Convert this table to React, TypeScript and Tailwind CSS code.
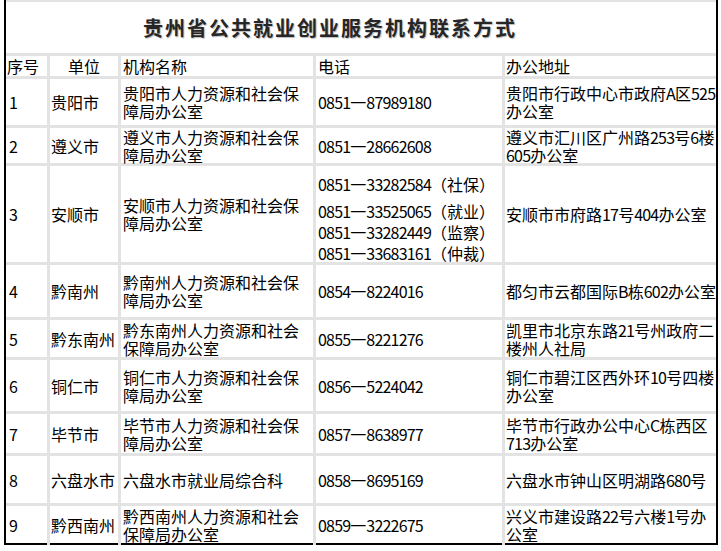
import React from 'react';

type Row = {
  no: string;
  unit: string;
  org: string[];
  phone: string[];
  addr: string[];
};

const rows: Row[] = [
  { no: '1', unit: '贵阳市', org: ['贵阳市人力资源和社会保', '障局办公室'], phone: ['0851一87989180'], addr: ['贵阳市行政中心市政府A区525', '办公室'] },
  { no: '2', unit: '遵义市', org: ['遵义市人力资源和社会保', '障局办公室'], phone: ['0851一28662608'], addr: ['遵义市汇川区广州路253号6楼', '605办公室'] },
  {
    no: '3',
    unit: '安顺市',
    org: ['安顺市人力资源和社会保', '障局办公室'],
    phone: ['0851一33282584（社保）', '0851一33525065（就业）', '0851一33282449（监察）', '0851一33683161（仲裁）'],
    addr: ['安顺市市府路17号404办公室'],
  },
  { no: '4', unit: '黔南州', org: ['黔南州人力资源和社会保', '障局办公室'], phone: ['0854一8224016'], addr: ['都匀市云都国际B栋602办公室'] },
  { no: '5', unit: '黔东南州', org: ['黔东南州人力资源和社会', '保障局办公室'], phone: ['0855一8221276'], addr: ['凯里市北京东路21号州政府二', '楼州人社局'] },
  { no: '6', unit: '铜仁市', org: ['铜仁市人力资源和社会保', '障局办公室'], phone: ['0856一5224042'], addr: ['铜仁市碧江区西外环10号四楼', '办公室'] },
  { no: '7', unit: '毕节市', org: ['毕节市人力资源和社会保', '障局办公室'], phone: ['0857一8638977'], addr: ['毕节市行政办公中心C栋西区', '713办公室'] },
  { no: '8', unit: '六盘水市', org: ['六盘水市就业局综合科'], phone: ['0858一8695169'], addr: ['六盘水市钟山区明湖路680号'] },
  { no: '9', unit: '黔西南州', org: ['黔西南州人力资源和社会', '保障局办公室'], phone: ['0859一3222675'], addr: ['兴义市建设路22号六楼1号办', '公室'] },
];

const font = { fontFamily: '"Noto Sans CJK SC", "Noto Sans", sans-serif' };

// latin runs are a bit wide in Noto, squeeze them to ~8px per digit like the original sheet
function fmt(text: string) {
  return text.split(/([0-9A-Za-z]+)/).map((part, i) =>
    /^[0-9A-Za-z]+$/.test(part) ? (
      <span key={i} className="tracking-[-0.8px]">
        {part}
      </span>
    ) : (
      part
    )
  );
}

function Lines({ items }: { items: string[] }) {
  return (
    <div className="flex flex-col leading-[18px]">
      {items.map((t, i) => (
        <span key={i} className="whitespace-nowrap">
          {fmt(t)}
        </span>
      ))}
    </div>
  );
}

export default function App() {
  return (
    <div className="w-[721px] h-[551px] bg-white text-black text-[16px]" style={font}>
      <div className="ml-[4px] w-[714px] border-l-2 border-r-2 border-black bg-[#e3e3e3] pt-[2px]">
        <div className="grid grid-cols-[41px_68px_192px_186px_211px] grid-rows-[51px_20px_46px_35px_96px_52px_37px_51px_39px_47px_39px] gap-[3px]">
          <div className="col-span-5 bg-white flex items-center pl-[137px]">
            <h1 className="text-[20px] font-bold tracking-[2px] text-[#262626] leading-none [text-shadow:1px_1px_1px_#bbb]">
              贵州省公共就业创业服务机构联系方式
            </h1>
          </div>

          <div className="bg-white flex items-center pl-[1px] leading-[18px]">序号</div>
          <div className="bg-white flex items-center justify-center leading-[18px]">单位</div>
          <div className="bg-white flex items-center pl-[2px] leading-[18px]">机构名称</div>
          <div className="bg-white flex items-center pl-[2px] leading-[18px]">电话</div>
          <div className="bg-white flex items-center pl-[1px] leading-[18px]">办公地址</div>

          {rows.map((r, idx) => {
            const last = idx === rows.length - 1 ? 'border-b-2 border-black' : '';
            const multi = r.phone.length > 1;
            return (
              <React.Fragment key={r.no}>
                <div className={`bg-white flex items-center pl-[3px] ${last}`}>{r.no}</div>
                <div className={`bg-white flex items-center pl-[1px] ${last}`}>{r.unit}</div>
                <div className={`bg-white flex items-center pl-[2px] ${last}`}>
                  <Lines items={r.org} />
                </div>
                {multi ? (
                  <div className={`bg-white flex flex-col pl-[2px] pt-[8px] leading-[21px] ${last}`}>
                    {r.phone.map((p, i) => (
                      <span key={i} className={`whitespace-nowrap ${i === 0 ? 'mb-[6px]' : ''}`}>
                        {fmt(p)}
                      </span>
                    ))}
                  </div>
                ) : (
                  <div className={`bg-white flex items-center pl-[2px] ${last}`}>
                    <Lines items={r.phone} />
                  </div>
                )}
                <div className={`bg-white flex items-center pl-[1px] ${last}`}>
                  <Lines items={r.addr} />
                </div>
              </React.Fragment>
            );
          })}
        </div>
      </div>
    </div>
  );
}
